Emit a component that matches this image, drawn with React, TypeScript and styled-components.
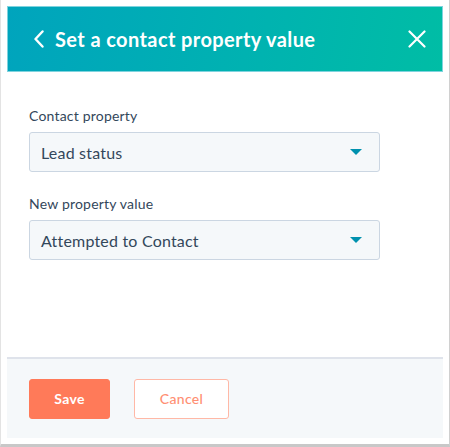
import React from "react";
import styled, { createGlobalStyle } from "styled-components";

const Global = createGlobalStyle`
  html, body { margin: 0; padding: 0; background: #ffffff; }
  body { font-family: Lato, "Open Sans", sans-serif; }
  * { box-sizing: border-box; }
`;

const Frame = styled.div`
  width: 450px;
  height: 447px;
  padding: 6px 6px 0 6px;
  border-left: 1px solid #e3e3e3;
  border-right: 1px solid #d0d0d0;
  border-bottom: 3px solid #c8c8c8;
  background: #ffffff;
`;

const Panel = styled.div`
  width: 436px;
  display: flex;
  flex-direction: column;
`;

const Header = styled.div`
  height: 66px;
  display: flex;
  align-items: center;
  padding: 0 16px 0 26px;
  background: linear-gradient(100deg, #00a4bd 0%, #00b2b1 55%, #00bda5 100%);
  border: 1px solid #7fd3de;
  color: #ffffff;
`;

const Title = styled.h1`
  flex: 1;
  margin: 0 0 0 11px;
  font-family: Lato, sans-serif;
  font-weight: 700;
  font-size: 20px;
  letter-spacing: 0.4px;
`;

const IconButton = styled.span`
  display: flex;
  align-items: center;
  justify-content: center;
`;

const Body = styled.div`
  height: 285px;
  padding: 35px 22px 0 22px;
  display: flex;
  flex-direction: column;
  background: #ffffff;
`;

const Field = styled.div`
  display: flex;
  flex-direction: column;
  margin-bottom: 23px;
`;

const Label = styled.label`
  font-size: 14px;
  letter-spacing: 0.2px;
  color: #33475b;
  margin-bottom: 7px;
  line-height: 18px;
`;

const Select = styled.div`
  width: 351px;
  height: 40px;
  display: flex;
  align-items: center;
  justify-content: space-between;
  padding: 0 17px 0 11px;
  background: #f5f8fa;
  border: 1px solid #cbd6e2;
  border-radius: 3px;
  font-size: 16px;
  letter-spacing: 0.2px;
  color: #33475b;
`;

const Caret = styled.span`
  width: 0;
  height: 0;
  border-left: 6px solid transparent;
  border-right: 6px solid transparent;
  border-top: 6px solid #0091ae;
`;

const Footer = styled.div`
  height: 81px;
  display: flex;
  align-items: center;
  gap: 24px;
  padding: 0 22px;
  background: #f5f8fa;
  border-top: 2px solid #dfe3eb;
`;

const Button = styled.button<{ $primary?: boolean }>`
  height: 40px;
  padding: 0;
  width: ${(p) => (p.$primary ? "81px" : "95px")};
  border-radius: 3px;
  font-family: Lato, sans-serif;
  font-size: 14px;
  letter-spacing: 0.3px;
  font-weight: ${(p) => (p.$primary ? 700 : 500)};
  background: ${(p) => (p.$primary ? "#ff7a59" : "#ffffff")};
  color: ${(p) => (p.$primary ? "#ffffff" : "#ff8f73")};
  border: 1px solid ${(p) => (p.$primary ? "#ff7a59" : "#ffb8a6")};
  cursor: pointer;
`;

export default function App() {
  return (
    <>
      <Global />
      <Frame>
        <Panel>
          <Header>
            <IconButton>
              <svg width="10" height="18" viewBox="0 0 10 18" fill="none">
                <path d="M8.5 1.5 L1.5 9 L8.5 16.5" stroke="#fff" strokeWidth="2.4" strokeLinecap="round" strokeLinejoin="round" />
              </svg>
            </IconButton>
            <Title>Set a contact property value</Title>
            <IconButton>
              <svg width="18" height="18" viewBox="0 0 18 18" fill="none">
                <path d="M1.5 1.5 L16.5 16.5 M16.5 1.5 L1.5 16.5" stroke="#fff" strokeWidth="2.2" strokeLinecap="round" />
              </svg>
            </IconButton>
          </Header>
          <Body>
            <Field>
              <Label>Contact property</Label>
              <Select>
                <span>Lead status</span>
                <Caret />
              </Select>
            </Field>
            <Field>
              <Label>New property value</Label>
              <Select>
                <span>Attempted to Contact</span>
                <Caret />
              </Select>
            </Field>
          </Body>
          <Footer>
            <Button $primary>Save</Button>
            <Button>Cancel</Button>
          </Footer>
        </Panel>
      </Frame>
    </>
  );
}
